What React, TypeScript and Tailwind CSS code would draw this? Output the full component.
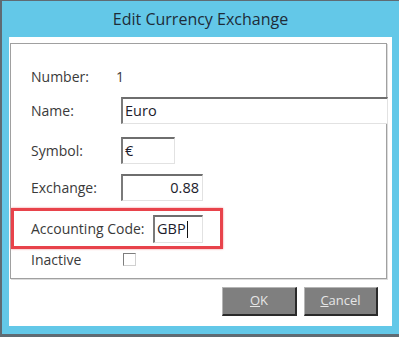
import React from "react";

const inputCls =
  "h-[27px] bg-white border-t-2 border-l-2 border-r border-b border-t-[#6e6e6e] border-l-[#7a7a7a] border-r-[#e2e2e2] border-b-[#e2e2e2] px-[2px] flex items-center text-[14.5px] text-[#1c1c2c]";

function Btn({ first, rest }: { first: string; rest: string }) {
  return (
    <div className="h-[29px] flex items-center justify-center bg-[#7f7f7f] border-t border-l border-t-[#b5b5b5] border-l-[#b5b5b5] border-r-2 border-b-2 border-r-[#2a2a2a] border-b-[#2a2a2a] text-[13px] text-[#e6e6e6]">
      <span>
        <span className="underline">{first}</span>
        {rest}
      </span>
    </div>
  );
}

export default function App() {
  return (
    <div
      className="w-[399px] h-[337px] bg-[#63c8e8] border-l-2 border-t border-b-[3px] border-[#5f6b73] flex flex-col pl-[7px] pr-[7px] pb-[8px] text-[#2a2a2a]"
      style={{ fontFamily: '"Open Sans", "Noto Sans", sans-serif' }}
    >
      <div className="h-[36px] flex items-center justify-center text-[16px] text-[#1e2c38]">
        Edit Currency Exchange
      </div>
      <div className="flex-1 bg-white pt-[6px] pl-[1px] pr-[5px] flex flex-col">
        <div className="border border-[#a0a0a0] shadow-[inset_1px_1px_0_#ffffff,1px_1px_0_#dcdcdc] pt-[22px] pb-[11px] flex flex-col text-[14px] text-[#3a3a3a]">
          <div className="h-[20px] flex items-center pl-[20px]">
            <span className="w-[85px]">Number:</span>
            <span>1</span>
          </div>
          <div className="mt-[11px] flex items-center pl-[20px]">
            <span className="w-[90px]">Name:</span>
            <div className={inputCls + " w-[267px] -mr-[2px]"}>Euro</div>
          </div>
          <div className="mt-[13px] flex items-center pl-[20px]">
            <span className="w-[90px]">Symbol:</span>
            <div className={inputCls + " w-[54px]"}>€</div>
          </div>
          <div className="mt-[10px] flex items-center pl-[20px]">
            <span className="w-[90px]">Exchange:</span>
            <div className={inputCls + " w-[82px] justify-end pr-[3px]"}>0.88</div>
          </div>
          <div className="mt-[7px] self-start border-[3px] border-[#e8434b] shadow-[0_0_2px_#f08a8f] h-[41px] w-[212px] flex items-center pl-[17px]">
            <span className="w-[122px]">Accounting Code:</span>
            <div className={inputCls + " w-[50px] h-[28px]"}>
              GBP<span className="w-px h-[17px] bg-[#111] ml-[1px]"></span>
            </div>
          </div>
          <div className="mt-[2px] h-[16px] flex items-center pl-[20px]">
            <span className="w-[92px]">Inactive</span>
            <div className="w-[13px] h-[13px] border border-[#7e7e7e] border-r-[#d0d0d0] border-b-[#d0d0d0] bg-white"></div>
          </div>
        </div>
        <div className="mt-[8px] flex justify-end gap-[7px] pr-[9px]">
          <div className="w-[75px]">
            <Btn first="O" rest="K" />
          </div>
          <div className="w-[74px]">
            <Btn first="C" rest="ancel" />
          </div>
        </div>
      </div>
    </div>
  );
}
